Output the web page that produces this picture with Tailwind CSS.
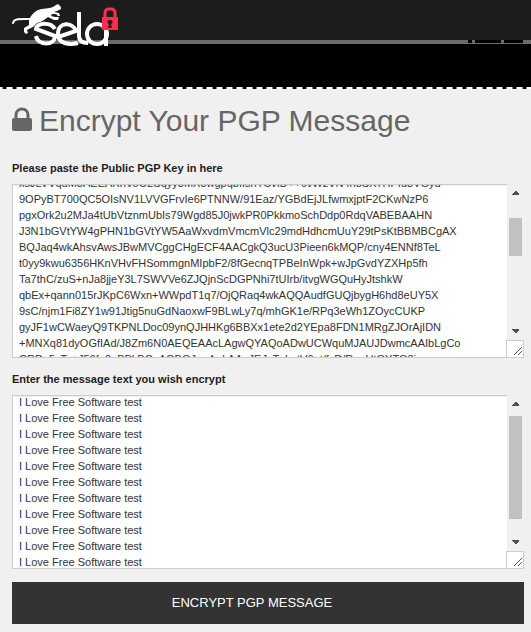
<!DOCTYPE html>
<html lang="en">
<head>
  <meta charset="UTF-8" />
  <meta name="viewport" content="width=device-width, initial-scale=1.0" />
  <title>Encrypt Your PGP Message | sela</title>
  <script src="https://cdn.jsdelivr.net/npm/@tailwindcss/browser@4"></script>
</head>
<body class="bg-[#f0f0f0] font-['Liberation_Sans',Arial,sans-serif] text-[#222]">
  <header class="relative">
    <div class="h-10 bg-[#1c1c1c] px-3">
      <a href="/" aria-label="sela" class="absolute">
        <svg class="block" width="108" height="48" viewBox="0 0 108 48" fill="none">
          <path stroke="#fff" stroke-width="2" stroke-linecap="round" d="M1 23 C2 18 10 19 19 19" />
          <path fill="#fff" d="M17 20 C19 15 22 12 26 10 C31 8 37 9 41 7 L44 5 L46 4 L47 5 L49 7 L49 9 L45 11 L42 12 L47 13 L48 16 L46 16 L44 14 L40 14 L39 16 L43 17 L47 17 L46 20 L42 20 L36 17 C33 19 30 22 25 23 L21 27 L15 30 L16 33 L14 34 L12 32 L12 28 L17 25 Z" />
          <g stroke="#fff" stroke-width="4">
            <path d="M43 29 C39 22 25 22 24 29 L43 36 C43 46 26 46 24 36" />
            <path d="M46 37 L64 31 C61 22 46 21 46 34 C46 44 57 45 66 43" />
            <path d="M67 12 V36 Q67 43 76 43" />
            <circle cx="85" cy="34" r="10" />
            <path d="M94 28 V46" />
          </g>
          <path stroke="#ff2d4f" stroke-width="3" d="M93 18 V13 Q93 9 97 9 H99 Q103 9 103 13 V18" />
          <path fill="#ff2d4f" d="M90 17 H106 V30 H90 Z" />
          <path fill="#1c1c1c" d="M98 20 A2 2 0 0 1 99 24 L100 28 H96 L97 24 A2 2 0 0 1 98 20 Z" />
        </svg>
      </a>
    </div>
    <div class="h-1 bg-[#6b6b6b] flex justify-end gap-[3px] pr-2">
      <span class="w-1 h-[3px] bg-black"></span>
      <span class="w-[26px] h-[3px] bg-black"></span>
      <span class="w-[19px] h-[3px] bg-black"></span>
    </div>
    <div class="h-[43px] bg-black"></div>
    <div class="h-0.5 bg-[repeating-linear-gradient(90deg,#fff_0_2px,#888_2px_3px,#000_3px_6px,#888_6px_7px,#fff_7px_10px)]"></div>
  </header>

  <main class="pl-3 pr-[7px] pb-2">
    <h1 class="flex items-center gap-[7px] pt-3 text-[30px] leading-10 text-[#666]">
      <svg class="-mt-1" width="20" height="24" viewBox="0 0 20 24">
        <path fill="none" stroke="#666" stroke-width="3" d="M4 12 V8 C4 0 16 0 16 8 V12" />
        <rect y="11" width="20" height="13" rx="2" fill="#666" />
      </svg>
      Encrypt Your PGP Message
    </h1>

    <form class="mt-[19px]">
      <label for="key" class="block text-[11px] leading-4 font-bold mb-2">Please paste the Public PGP Key in here</label>
      <div class="flex h-[174px] mb-[13px]">
        <textarea id="key" wrap="off" spellcheck="false" class="flex-1 min-w-0 resize-none overflow-hidden bg-white border border-r-0 border-[#ccc] pl-1.5 text-[11px] leading-4 text-[#333] outline-none inset-shadow-[0_1px_1px_#eee]">
xsJLVVquM3AEEAKnVoO2Sqyy3MX8wgpqbIIsnTCvID++6vWzVN4n8SX7HPIu3VGyd
9OPyBT700QC5OIsNV1LVVGFrvIe6PTNNW/91Eaz/YGBdEjJLfwmxjptF2CKwNzP6
pgxOrk2u2MJa4tUbVtznmUbIs79Wgd85J0jwkPR0PkkmoSchDdp0RdqVABEBAAHN
J3N1bGVtYW4gPHN1bGVtYW5AaWxvdmVmcmVlc29mdHdhcmUuY29tPsKtBBMBCgAX
BQJaq4wkAhsvAwsJBwMVCggCHgECF4AACgkQ3ucU3Pieen6kMQP/cny4ENNf8TeL
t0yy9kwu6356HKnVHvFHSommgnMIpbF2/8fGecnqTPBeInWpk+wJpGvdYZXHp5fh
Ta7thC/zuS+nJa8jjeY3L7SWVVe6ZJQjnScDGPNhi7tUIrb/itvgWGQuHyJtshkW
qbEx+qann015rJKpC6Wxn+WWpdT1q7/OjQRaq4wkAQQAudfGUQjbygH6hd8eUY5X
9sC/njm1Fi8ZY1w91Jtig5nuGdNaoxwF9BLwLy7q/mhGK1e/RPq3eWh1ZOycCUKP
gyJF1wCWaeyQ9TKPNLDoc09ynQJHHKg6BBXx1ete2d2YEpa8FDN1MRgZJOrAjIDN
+MNXq81dyOGfIAd/J8Zm6N0AEQEAAcLAgwQYAQoADwUCWquMJAUJDwmcAAIbLgCo
CRDe5xTc+J56fp0gBBkBCgAGBQJaq4wkAAoJEJyTuImtV0et/fsD/RugUtQYTO3i</textarea>
        <div class="w-[17px] flex flex-col" aria-hidden="true">
          <svg class="ml-[5px] mt-[7px]" width="7" height="4" shape-rendering="crispEdges"><path fill="#505050" d="M3 0 H4 L7 3 V4 H0 V3 Z" /></svg>
          <div class="ml-0.5 mt-[23px] w-[13px] h-[38px] bg-[#c1c1c1]"></div>
          <svg class="ml-[5px] mt-auto mb-[7px]" width="7" height="4" shape-rendering="crispEdges"><path fill="#505050" d="M0 0 H7 V1 L4 4 H3 L0 1 Z" /></svg>
          <div class="-ml-px w-[18px] h-[18px] bg-white border border-[#ccc] flex items-end justify-end">
            <svg width="10" height="11"><path stroke="#555" d="M1 9 L9 1 M5 9 L9 5" /></svg>
          </div>
        </div>
      </div>

      <label for="message" class="block text-[11px] leading-4 font-bold mb-2">Enter the message text you wish encrypt</label>
      <div class="flex h-[174px] mb-[13px]">
        <textarea id="message" wrap="off" spellcheck="false" class="flex-1 min-w-0 resize-none overflow-hidden bg-white border border-r-0 border-[#ccc] pl-1.5 text-[11px] leading-4 text-[#333] outline-none inset-shadow-[0_1px_1px_#eee]">
I Love Free Software test
I Love Free Software test
I Love Free Software test
I Love Free Software test
I Love Free Software test
I Love Free Software test
I Love Free Software test
I Love Free Software test
I Love Free Software test
I Love Free Software test
I Love Free Software test</textarea>
        <div class="w-[17px] flex flex-col" aria-hidden="true">
          <svg class="ml-[5px] mt-[7px]" width="7" height="4" shape-rendering="crispEdges"><path fill="#505050" d="M3 0 H4 L7 3 V4 H0 V3 Z" /></svg>
          <div class="ml-0.5 mt-[10px] w-[13px] h-[103px] bg-[#c1c1c1]"></div>
          <svg class="ml-[5px] mt-auto mb-[7px]" width="7" height="4" shape-rendering="crispEdges"><path fill="#505050" d="M0 0 H7 V1 L4 4 H3 L0 1 Z" /></svg>
          <div class="-ml-px w-[18px] h-[18px] bg-white border border-[#ccc] flex items-end justify-end">
            <svg width="10" height="11"><path stroke="#555" d="M1 9 L9 1 M5 9 L9 5" /></svg>
          </div>
        </div>
      </div>

      <button type="submit" class="block w-full h-[42px] pr-8 bg-[#333] text-white text-[13px]">ENCRYPT PGP MESSAGE</button>
    </form>
  </main>

  <script>
    document.getElementById('key').scrollTop = 10;
    document.getElementById('message').scrollTop = 2;
  </script>
</body>
</html>
